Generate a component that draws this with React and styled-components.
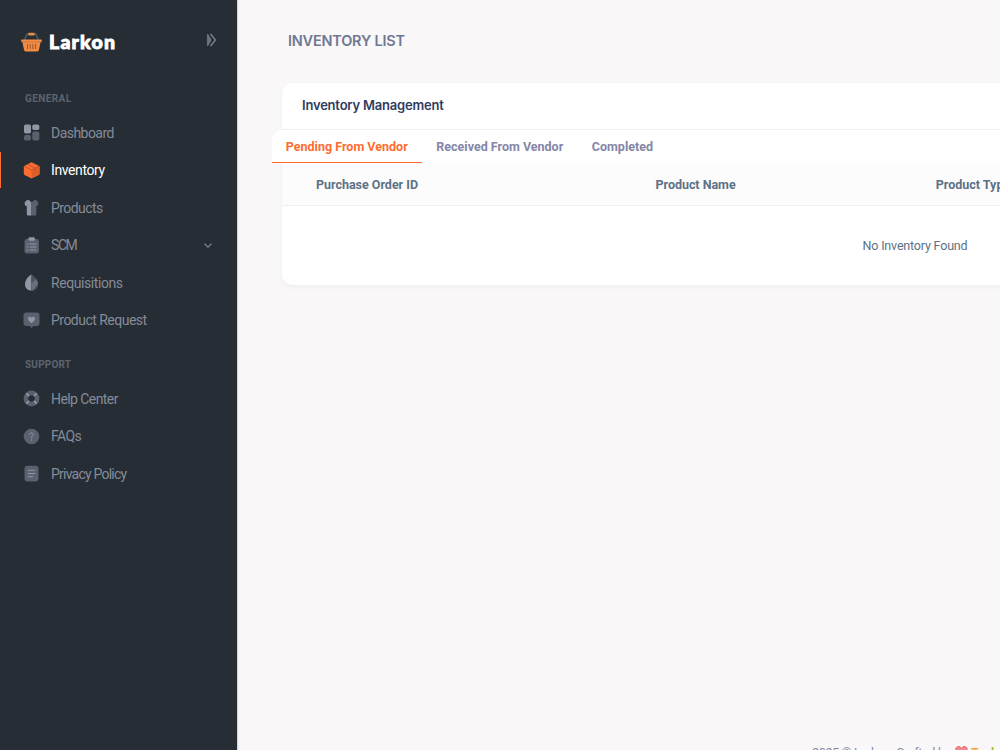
import React from "react";
import styled, { createGlobalStyle } from "styled-components";

const GlobalStyle = createGlobalStyle`
  *, *::before, *::after { box-sizing: border-box; }
  body {
    margin: 0;
    background: #f9f7f7;
    font-family: Roboto, "Liberation Sans", sans-serif;
    overflow: hidden;
  }
`;

const Shell = styled.div`
  display: flex;
  height: 100vh;
  overflow: hidden;
`;

const Sidebar = styled.aside`
  flex: 0 0 237px;
  background: #262d34;
  box-shadow: 0 0 2px rgba(38, 45, 52, 0.5);
`;

const LogoRow = styled.div`
  display: flex;
  align-items: center;
  justify-content: space-between;
  height: 82px;
  padding: 1px 20px 0 21px;
`;

const Brand = styled.div`
  display: flex;
  align-items: center;
  gap: 7px;
`;

const BrandName = styled.span`
  font-family: Lato, "Liberation Sans", sans-serif;
  font-weight: 900;
  font-size: 19.5px;
  line-height: 24px;
  letter-spacing: 1.2px;
  color: #fff;
  -webkit-text-stroke: 0.9px #fff;
`;

const Toggle = styled.span`
  display: flex;
  margin-top: -4px;
`;

const MenuTitle = styled.div`
  height: 32px;
  margin-top: ${(p) => p.$top || 0}px;
  padding-left: 25px;
  font-size: 10px;
  font-weight: 700;
  line-height: 33.5px;
  letter-spacing: ${(p) => p.$ls}px;
  color: #5d6470;
`;

const MenuItem = styled.a`
  display: flex;
  align-items: center;
  height: 37.5px;
  padding: 0 24px 0 23px;
  gap: 11px;
  color: ${(p) => (p.$active ? "#fff" : "#858b99")};
  background: ${(p) => (p.$active ? "linear-gradient(#ff6c2f, #ff6c2f) 0 50% / 1px 36px no-repeat" : "none")};
  font-size: 14px;
  letter-spacing: ${(p) => p.$ls || 0}px;
`;

const MenuIcon = styled.svg`
  width: 17px;
  height: 17px;
  flex: none;
`;

const MenuText = styled.span`
  flex: 1;
  white-space: nowrap;
`;

const Main = styled.main`
  flex: 1;
  min-width: 0;
  display: flex;
  flex-direction: column;
  overflow: hidden;
`;

const PageHeader = styled.header`
  height: 82.5px;
  padding: 31px 0 0 51px;
`;

const PageTitle = styled.h4`
  margin: 0;
  font-family: Inter, "Liberation Sans", sans-serif;
  font-size: 14.5px;
  font-weight: 600;
  line-height: 20px;
  letter-spacing: -0.22px;
  color: #707793;
`;

const Card = styled.section`
  width: 1267px;
  height: 202.7px;
  margin-left: 44.5px;
  border-radius: 10px;
  background: #fff;
  box-shadow: 0 2px 4px rgba(95, 60, 60, 0.06);
`;

const CardHeader = styled.div`
  height: 47px;
  padding-left: 20.5px;
  border-bottom: 1px solid #eaf0f3;
  font-family: Inter, "Liberation Sans", sans-serif;
  font-size: 13px;
  font-weight: 600;
  line-height: 45px;
  letter-spacing: -0.2px;
  color: #313b5e;
`;

const Tabs = styled.nav`
  display: flex;
  height: 33.5px;
  margin-left: -10px;
  border-radius: 10px 0 0 0;
  background: #fff;
`;

const Tab = styled.span`
  padding: 0 14.3px;
  border-bottom: 1px solid ${(p) => (p.$active ? "#ff6c2f" : "transparent")};
  color: ${(p) => (p.$active ? "#ff6c2f" : "#8486a7")};
  font-size: 12.5px;
  font-weight: 700;
  line-height: 33px;
  letter-spacing: ${(p) => p.$ls}px;
  white-space: nowrap;
`;

const TableHead = styled.div`
  display: grid;
  grid-template-columns: 339.5px 280.3px 1fr;
  height: 42.5px;
  padding-left: 34.5px;
  background: #fcfcfc;
  border-bottom: 1px solid #eaf0f3;
  color: #5d7186;
  font-size: 12.5px;
  font-weight: 700;
  line-height: 43.5px;
`;

const HeadCell = styled.span`
  letter-spacing: ${(p) => p.$ls}px;
`;

const Empty = styled.div`
  height: 79px;
  line-height: 79px;
  text-align: center;
  font-size: 12.5px;
  letter-spacing: -0.18px;
  color: #5d7186;
`;

const Footer = styled.footer`
  display: flex;
  align-items: flex-start;
  height: 6px;
  margin-top: auto;
  padding-left: 575px;
  overflow: hidden;
  white-space: nowrap;
  font-size: 12.5px;
  line-height: 17px;
  letter-spacing: -0.3px;
  color: #8486a7;
`;

const Heart = styled.svg`
  flex: none;
  width: 13px;
  height: 13px;
  margin: 1px 2.5px 0 5px;
`;

const Maker = styled.b`
  letter-spacing: 0;
  background: linear-gradient(90deg, #f9a13a 0 12px, #a9b531 22px);
  -webkit-background-clip: text;
  color: transparent;
`;

const light = "#9297a5";
const dim = "#5b616e";

const icons = {
  dashboard: (
    <>
      <rect x="1" y="0.5" width="7" height="9" rx="1.8" fill={light} />
      <rect x="9.3" y="0.5" width="7" height="5.5" rx="1.8" fill={light} />
      <rect x="1" y="11" width="7" height="5.5" rx="1.8" fill={dim} />
      <rect x="9.3" y="7.5" width="7" height="9" rx="1.8" fill={dim} />
    </>
  ),
  box: (
    <>
      <path d="M8.5.3 15.7 3.8Q16.5 4.3 16.5 5.3v6Q16.5 12.4 15.7 12.9L8.5 16.5 1.6 12.9Q.8 12.4.8 11.3v-6Q.8 4.3 1.6 3.8Z" fill="#ff6c2f" />
      <path d="M8.5 7.9 16.2 4.1q.3.4.3 1.2v6q0 1.1-.8 1.6L8.5 16.5Z" fill="#df5f2b" />
      <path d="m1 4.2 7.5 3.8 7.6-3.8M4.6 2.3l7.6 3.8v3" fill="none" stroke="#b34d2b" strokeWidth=".7" />
    </>
  ),
  shirt: (
    <>
      <path d="M8.5 3.1Q6.4 2.7 6 .7L3.4 1.4 1.5 3.8l.6 2.7 1.7.5v8.3q0 1.2 1.3 1.2h3.4Z" fill={light} />
      <path d="M8.5 3.1Q10.7 2.7 11.1.7l2.6.7 1.8 2.4-.6 2.7-1.6.5v8.3q0 1.2-1.3 1.2H8.5Z" fill={dim} />
    </>
  ),
  clipboard: (
    <>
      <rect x="1.5" y="2" width="14.4" height="14.5" rx="2.3" fill={dim} />
      <rect x="5.5" y=".3" width="6.4" height="3.4" rx="1.2" fill={light} />
      <path d="M4 7h1m2 0h6M4 10h1m2 0h6M4 13h1m2 0h6" stroke={light} strokeWidth="1" strokeLinecap="round" />
    </>
  ),
  leaf: (
    <>
      <path d="M8.5.3C5.2 2.5 2 6.1 2 10.2c0 3.9 3 6.4 6.5 6.4Z" fill={light} />
      <path d="M8.5.3C11.8 2.5 15 6.1 15 10.2c0 3.9-3 6.4-6.5 6.4Z" fill="#4b525e" />
      <path d="m8.5 9.2 4.8-4.3q1.6 2.6 1.7 5.1L9.8 16.4l-1.3.2Z" fill="#6a707d" />
    </>
  ),
  chatHeart: (
    <>
      <path d="M3.3.5h10.4q2.8 0 2.8 2.8v7.8q0 2.8-2.8 2.8h-3.3l-1.9 2-1.9-2H3.3Q.5 13.9.5 11.1V3.3Q.5.5 3.3.5Z" fill={dim} />
      <path d="M8.5 11.2C6.5 9.8 5 8.6 5 6.6c0-2 2.3-2.5 3.5-.9C9.7 4.1 12 4.6 12 6.6c0 2-1.5 3.2-3.5 4.6Z" fill={light} />
    </>
  ),
  buoy: (
    <>
      <circle cx="8.5" cy="8.5" r="5.6" fill="none" stroke={dim} strokeWidth="4.6" />
      <path d="m3.3 3.3 2.8 2.8m4.8 4.8 2.8 2.8m0-10.4-2.8 2.8m-4.8 4.8-2.8 2.8" stroke={light} strokeWidth="1.7" />
    </>
  ),
  question: (
    <>
      <circle cx="8.5" cy="8.5" r="7.8" fill={dim} />
      <path d="M6.7 6.6c0-2.4 3.6-2.4 3.6-.1 0 1.5-1.8 1.4-1.8 3.3" fill="none" stroke={light} strokeWidth="1" strokeLinecap="round" />
      <circle cx="8.5" cy="12" r=".75" fill={light} />
    </>
  ),
  document: (
    <>
      <rect x="1.5" y=".7" width="14" height="15.8" rx="3" fill={dim} />
      <path d="M5.2 5.3h6.7M5.2 8.5h6.7M5.2 11.7h4.4" stroke={light} strokeWidth="1" strokeLinecap="round" />
    </>
  ),
};

const general = [
  { label: "Dashboard", icon: "dashboard", ls: -0.54 },
  { label: "Inventory", icon: "box", active: true, ls: -0.4 },
  { label: "Products", icon: "shirt", ls: -0.58 },
  { label: "SCM", icon: "clipboard", more: true, ls: -1.4 },
  { label: "Requisitions", icon: "leaf", ls: -0.42 },
  { label: "Product Request", icon: "chatHeart", ls: -0.52 },
];

const support = [
  { label: "Help Center", icon: "buoy", ls: -0.57 },
  { label: "FAQs", icon: "question", ls: -0.55 },
  { label: "Privacy Policy", icon: "document", ls: -0.77 },
];

function Menu({ items }) {
  return items.map((item) => (
    <MenuItem key={item.label} $active={item.active} $ls={item.ls}>
      <MenuIcon viewBox="0 0 17 17">{icons[item.icon]}</MenuIcon>
      <MenuText>{item.label}</MenuText>
      {item.more && (
        <svg width="10" height="10" viewBox="0 0 10 10">
          <path d="m1.5 3.7 3.5 3.5 3.5-3.5" fill="none" stroke="#858b99" strokeWidth="1.1" />
        </svg>
      )}
    </MenuItem>
  ));
}

function Basket() {
  return (
    <svg width="21" height="20" viewBox="0 0 21 20">
      <path d="M3.5 8 6.2 2h8.6l2.7 6" fill="none" stroke="#43656d" strokeWidth="1.4" />
      <rect x="7.3" y=".7" width="6.4" height="2.8" rx=".8" fill="#e98a43" />
      <path d="M.8 7.4h19.4q.6 0 .6.6v1.2q0 .7-.8.7h-.4l-1.7 8.2q-.3 1.4-1.5 1.4H4.6q-1.2 0-1.5-1.4L1.4 9.9H1q-.8 0-.8-.7V8q0-.6.6-.6Z" fill="#f08d45" />
      <path d="M2 10h17" stroke="#cf7038" strokeWidth=".8" />
      <path d="M6.5 12v5M9.2 12v5M11.9 12v5M14.6 12v5" stroke="#9e552f" strokeWidth="1" />
    </svg>
  );
}

export default function App() {
  return (
    <>
      <GlobalStyle />
      <Shell>
        <Sidebar>
          <LogoRow>
            <Brand>
              <Basket />
              <BrandName>Larkon</BrandName>
            </Brand>
            <Toggle>
              <svg width="11" height="14" viewBox="0 0 11 14">
                <path d="M1.6 1.2v11.6l3.6-5.8Z" fill="#6d7380" stroke="#6d7380" strokeLinejoin="round" />
                <path d="m4.6 1 4.8 6-4.8 6" fill="none" stroke="#7c8290" strokeWidth="1.4" />
              </svg>
            </Toggle>
          </LogoRow>
          <MenuTitle $ls={0.4}>GENERAL</MenuTitle>
          <Menu items={general} />
          <MenuTitle $top={9} $ls={0.2}>SUPPORT</MenuTitle>
          <Menu items={support} />
        </Sidebar>
        <Main>
          <PageHeader>
            <PageTitle>INVENTORY LIST</PageTitle>
          </PageHeader>
          <Card>
            <CardHeader>Inventory Management</CardHeader>
            <Tabs>
              <Tab $active $ls={0.01}>Pending From Vendor</Tab>
              <Tab $ls={0}>Received From Vendor</Tab>
              <Tab $ls={0}>Completed</Tab>
            </Tabs>
            <TableHead>
              <HeadCell $ls={-0.02}>Purchase Order ID</HeadCell>
              <HeadCell $ls={-0.03}>Product Name</HeadCell>
              <HeadCell $ls={0}>Product Type</HeadCell>
            </TableHead>
            <Empty>No Inventory Found</Empty>
          </Card>
          <Footer>
            2025 © Larkon. Crafted by
            <Heart viewBox="0 0 13 13">
              <path d="M6.5 11.5C2 8.5.8 6.6.8 4.4.8 1.4 4.6.5 6.5 3.2 8.4.5 12.2 1.4 12.2 4.4c0 2.2-1.2 4.1-5.7 7.1Z" fill="#f08b8e" stroke="#ef5f5f" />
            </Heart>
            <Maker>Techzaa</Maker>
          </Footer>
        </Main>
      </Shell>
    </>
  );
}
